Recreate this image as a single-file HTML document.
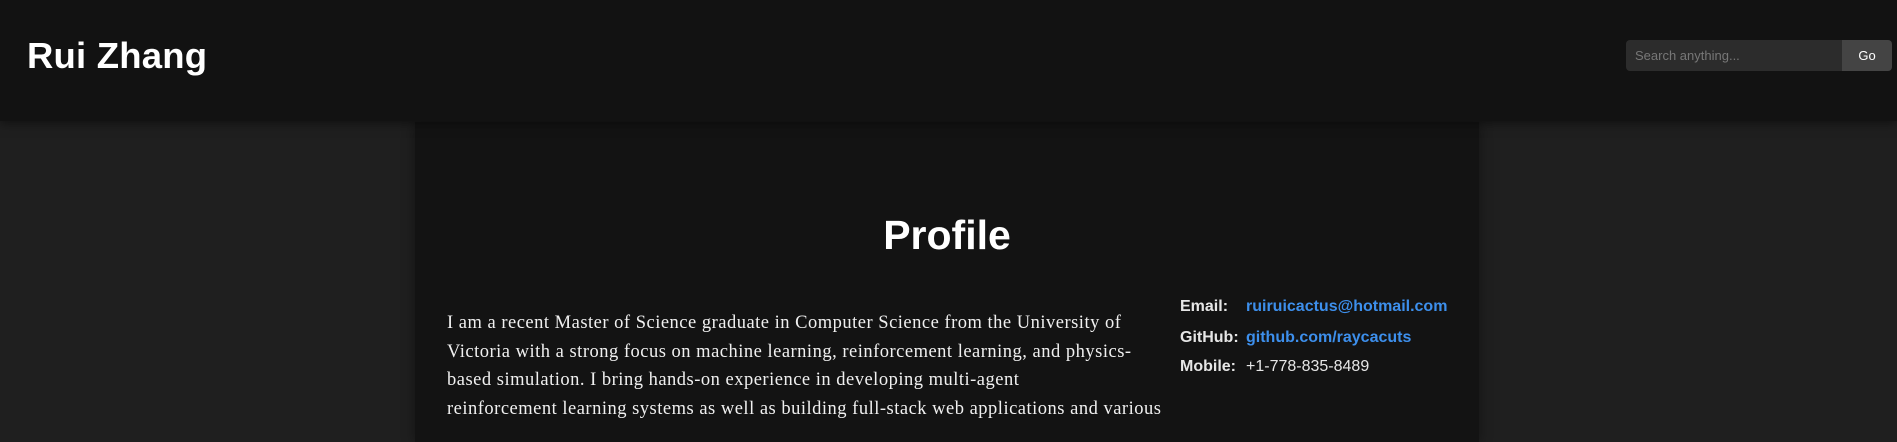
<!DOCTYPE html>
<html><head><meta charset="utf-8"><style>
*{margin:0;padding:0;box-sizing:border-box}
html,body{width:1897px;height:408px;overflow:hidden;background:#1f1f1f;font-family:"Liberation Sans",Arial,sans-serif}
header{position:absolute;left:0;top:0;width:1897px;height:121px;background:#121212;box-shadow:0 2px 10px rgba(0,0,0,.5);z-index:2}
header h1{position:absolute;left:27px;top:35px;font-size:36.5px;font-weight:bold;color:#fff;line-height:42px;letter-spacing:.2px}
.search{position:absolute;left:1626px;top:40px;height:31px;width:266px;display:flex;border-radius:4px;overflow:hidden}
.search .in{width:216px;background:#2c2c2c;color:#777;font-size:13px;line-height:31px;padding-left:9px}
.search .go{width:50px;background:#444;color:#fff;font-size:13px;line-height:31px;text-align:center}
.card{position:absolute;left:415px;top:122px;width:1064px;height:320px;background:#131313;box-shadow:0 0 12px rgba(0,0,0,.4)}
h2{position:absolute;left:0;width:1064px;top:211px;text-align:center;font-size:41px;color:#fff;font-weight:bold;line-height:48px}
.p{position:absolute;left:447px;top:309px;color:#f0f0f0;font-family:"Liberation Serif",serif;font-size:18.5px;line-height:28.5px;white-space:nowrap;letter-spacing:.5px}
.c{position:absolute;left:1180px;color:#e6e6e6;font-size:16px;line-height:20px}
.c b{display:inline-block;width:66px}
.c a{color:#3d8fec;font-weight:bold;text-decoration:none}
</style></head><body>
<header><h1>Rui Zhang</h1>
<div class="search"><div class="in">Search anything...</div><div class="go">Go</div></div></header>
<div class="card"></div>
<h2 style="left:415px">Profile</h2>
<div class="p">I am a recent Master of Science graduate in Computer Science from the University of<br>Victoria with a strong focus on machine learning, reinforcement learning, and physics-<br>based simulation. I bring hands-on experience in developing multi-agent<br>reinforcement learning systems as well as building full-stack web applications and various</div>
<div class="c" style="top:297px"><b>Email:</b><a>ruiruicactus@hotmail.com</a></div>
<div class="c" style="top:328px"><b>GitHub:</b><a>github.com/raycacuts</a></div>
<div class="c" style="top:357px"><b>Mobile:</b>+1-778-835-8489</div>
</body></html>
